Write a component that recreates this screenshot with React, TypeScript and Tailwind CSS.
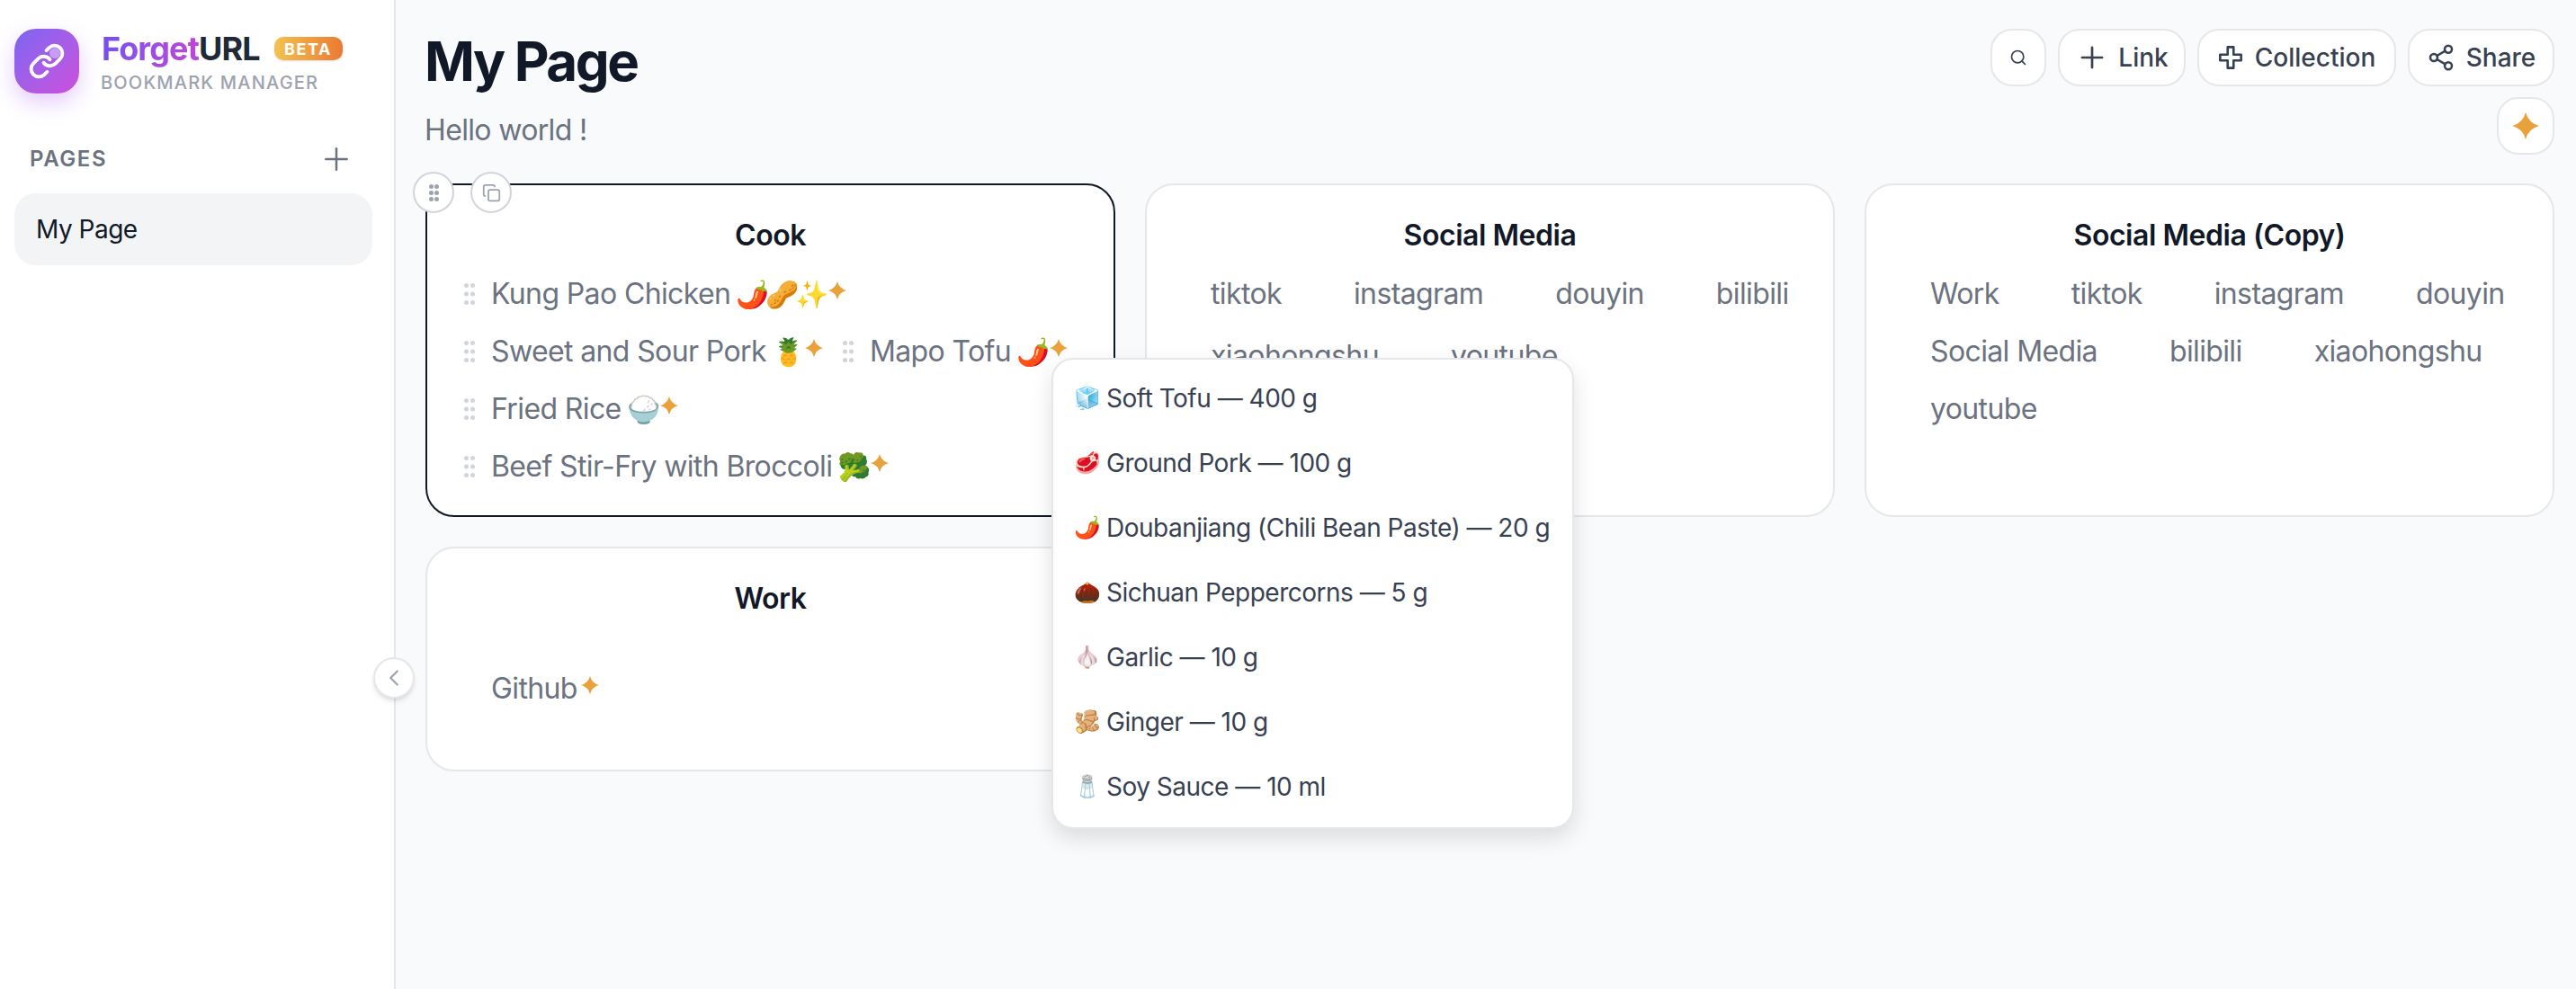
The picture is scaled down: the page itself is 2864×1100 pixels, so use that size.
import { Copy, ChevronLeft, Search, Share2, Plus, Link as LinkIcon } from "lucide-react";

const Sparkle = ({ s = 20, cls = "" }: { s?: number; cls?: string }) => (
  <svg width={s} height={s} viewBox="0 0 24 24" className={cls}>
    <path d="M12 0Q14.5 9.5 24 12Q14.5 14.5 12 24Q9.5 14.5 0 12Q9.5 9.5 12 0Z" fill="#e9a23b" />
  </svg>
);

const Dots = ({ fill, w, h, r }: { fill: string; w: number; h: number; r: number }) => (
  <svg width={w} height={h} viewBox={`0 0 ${w} ${h}`}>
    {[r, w - r].map((x) =>
      [r, h / 2, h - r].map((y) => <circle key={`${x}-${y}`} cx={x} cy={y} r={r} fill={fill} />)
    )}
  </svg>
);

const Item = ({ label, emoji, grip = false, spark = false }: { label: string; emoji?: string; grip?: boolean; spark?: boolean }) => (
  <div className="flex h-[64px] items-center text-[32px] tracking-[-0.62px] text-[#6b7280]">
    <div className="mr-[18px] flex w-[12px] justify-center">{grip && <Dots fill="#d1d5db" w={12} h={24} r={2.5} />}</div>
    <span className="whitespace-nowrap">{label}</span>
    {emoji && <span className="ml-[6px] whitespace-nowrap text-[30px] tracking-[-4px]">{emoji}</span>}
    <div className={`mb-[8px] flex pl-[4px] ${emoji ? "w-[46px]" : "w-[50px]"}`}>{spark && <Sparkle s={20} />}</div>
  </div>
);

const Card = ({ title, active, children, listCls }: { title: string; active?: boolean; children: React.ReactNode; listCls: string }) => (
  <div className={`relative rounded-[32px] border-2 bg-white pt-[36px] ${active ? "border-[#111827]" : "border-[#e5e7eb]"}`}>
    <h3 className="text-center text-[32px] leading-[40px] font-semibold tracking-[-0.45px] text-[#111827]">{title}</h3>
    <div className={`flex flex-wrap pl-[41px] ${listCls}`}>{children}</div>
  </div>
);

const ingredients = [
  ["🧊", "Soft Tofu — 400 g"],
  ["🥩", "Ground Pork — 100 g"],
  ["🌶️", "Doubanjiang (Chili Bean Paste) — 20 g"],
  ["🌰", "Sichuan Peppercorns — 5 g"],
  ["🧄", "Garlic — 10 g"],
  ["🫚", "Ginger — 10 g"],
  ["🧂", "Soy Sauce — 10 ml"],
];

const btn = "flex h-[64px] items-center justify-center rounded-[24px] border-2 border-[#e5e7eb] bg-white text-[28px] font-medium text-[#374151]";

export default function App() {
  return (
    <div className="relative flex h-[1100px] w-[2864px] overflow-hidden bg-[#f9fafb] font-['Inter',sans-serif]">
      <aside className="w-[440px] shrink-0 border-r-2 border-[#e5e7eb] bg-white px-[16px] pt-[32px]">
        <div className="flex items-start">
          <div className="relative flex h-[72px] w-[72px] items-center justify-center rounded-[24px] bg-gradient-to-br from-[#7c64f2] to-[#cb4fdc] shadow-[0_10px_24px_rgba(168,85,247,0.3)]">
            <LinkIcon size={42} color="white" strokeWidth={2.2} />
            <div className="absolute top-[21px] left-[39px] h-[12px] w-[12px] rounded-full bg-white/40" />
          </div>
          <div className="ml-[25px]">
            <div className="flex items-center">
              <span className="text-[36px] leading-[44px] font-bold tracking-[-0.9px] text-[#1f2937]">
                <span className="bg-gradient-to-r from-[#7450f0] to-[#c044d8] bg-clip-text text-transparent">Forget</span>URL
              </span>
              <span className="ml-[16px] flex h-[26px] w-[76px] items-center justify-center rounded-[10px] bg-gradient-to-r from-[#f2c24f] to-[#e97a33] text-[18px] font-bold tracking-[1.6px] text-white shadow-sm">
                BETA
              </span>
            </div>
            <div className="mt-[2px] -ml-[1px] text-[20px] leading-[28px] font-medium tracking-[1.2px] text-[#9ca3af]">BOOKMARK MANAGER</div>
          </div>
        </div>
        <div className="mt-[47px] flex h-[48px] items-center justify-between pr-[28px] pl-[17px]">
          <span className="text-[24px] font-semibold tracking-[1.6px] text-[#6b7280]">PAGES</span>
          <Plus size={40} color="#6b7280" strokeWidth={1.5} />
        </div>
        <div className="mt-[14px] mr-[8px] flex h-[80px] items-center rounded-[24px] bg-[#f3f4f6] px-[24px] text-[28px] tracking-[-0.5px] text-[#111827]">My Page</div>
      </aside>

      <main className="min-w-0 flex-1 pt-[32px] pr-[24px] pl-[33px]">
        <header className="mb-[32px] flex items-start justify-between">
          <div className="-ml-[1px]">
            <h1 className="text-[60px] leading-[72px] font-bold tracking-[-2.4px] text-[#111827]">My Page</h1>
            <p className="mt-[21px] text-[32px] leading-[40px] tracking-[-0.65px] text-[#6b7280]">Hello world !</p>
          </div>
          <div className="flex w-[640px] flex-wrap justify-end gap-x-[13px] gap-y-[12px]">
            <div className={`${btn} w-[62px]`}><Search size={20} strokeWidth={2} /></div>
            <div className={`${btn} w-[142px] gap-[10px]`}><Plus size={38} strokeWidth={1.7} />Link</div>
            <div className={`${btn} w-[221px] gap-[13px]`}>
              <svg width="28" height="28" viewBox="0 0 30 30" fill="none" stroke="currentColor" strokeWidth="2.8" strokeLinejoin="round">
                <path d="M11.5 2.5h7v9h9v7h-9v9h-7v-9h-9v-7h9z" />
              </svg>
              Collection
            </div>
            <div className={`${btn} w-[163px] gap-[12px]`}><Share2 size={32} strokeWidth={1.9} />Share</div>
            <div className={`${btn} w-[64px]`}><Sparkle s={30} /></div>
          </div>
        </header>

        <div className="grid grid-cols-3 gap-[33px]">
          <Card title="Cook" active listCls="mt-[13px] pb-[22px]">
            <Item grip spark label="Kung Pao Chicken" emoji="🌶️🥜✨" />
            <Item grip spark label="Sweet and Sour Pork" emoji="🍍" />
            <Item grip spark label="Mapo Tofu" emoji="🌶️" />
            <Item grip spark label="Fried Rice" emoji="🍚" />
            <Item grip spark label="Beef Stir-Fry with Broccoli" emoji="🥦" />
            <div className="absolute -top-[15px] -left-[16px] flex gap-[18px]">
              <div className="flex h-[46px] w-[46px] items-center justify-center rounded-full border-2 border-[#d1d5db] bg-white"><Dots fill="#9ca3af" w={11} h={19} r={2.5} /></div>
              <div className="flex h-[46px] w-[46px] items-center justify-center rounded-full border-2 border-[#d1d5db] bg-white"><Copy size={21} color="#9ca3af" /></div>
            </div>
          </Card>
          <Card title="Social Media" listCls="mt-[13px] -mr-[10px] pb-[22px] gap-y-[5px]">
            {["tiktok", "instagram", "douyin", "bilibili", "xiaohongshu", "youtube"].map((l) => <Item key={l} label={l} />)}
          </Card>
          <Card title="Social Media (Copy)" listCls="mt-[13px] pb-[22px]">
            {["Work", "tiktok", "instagram", "douyin", "Social Media", "bilibili", "xiaohongshu", "youtube"].map((l) => <Item key={l} label={l} />)}
          </Card>
          <Card title="Work" listCls="mt-[48px] pb-[58px]">
            <Item spark label="Github" />
          </Card>
        </div>
      </main>

      <div className="absolute top-[731px] left-[415px] flex h-[46px] w-[46px] items-center justify-center rounded-full border-2 border-[#e5e7eb] bg-white shadow-md">
        <ChevronLeft size={30} color="#9ca3af" strokeWidth={1.75} />
      </div>

      <div className="absolute top-[398px] left-[1169px] w-[581px] rounded-[24px] border-2 border-[#e5e7eb] bg-white pt-[7px] pb-[9px] shadow-[0_10px_24px_rgba(0,0,0,0.12)]">
        {ingredients.map(([e, t]) => (
          <div key={t} className="flex h-[72px] items-center px-[23px] text-[28px] tracking-[-0.5px] text-[#374151]">
            <span className="mr-[8px] w-[28px] text-center text-[24px] tracking-normal">{e}</span>
            <span className="whitespace-nowrap">{t}</span>
          </div>
        ))}
      </div>
    </div>
  );
}
